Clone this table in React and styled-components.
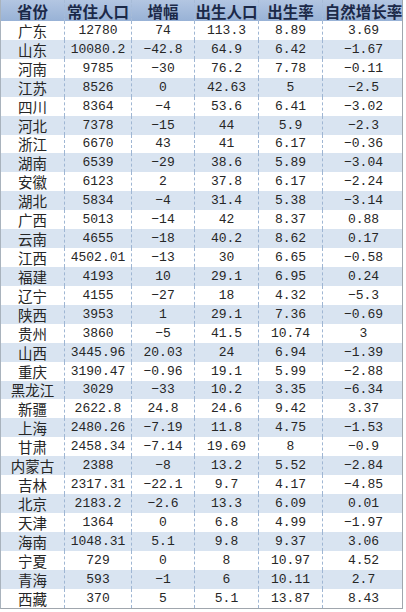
import React from 'react'
import styled, { createGlobalStyle } from 'styled-components';

const GlobalStyle = createGlobalStyle`
  html, body {
    margin: 0;
    padding: 0;
    background: #fff;
  }
`

const COLS = '63px 67px 63px 64px 64px 82px';

const Table = styled.div`
  width: 403px;
  display: flex;
  flex-direction: column;
  border-left: 1px solid #a9b3bd;
  border-right: 1px solid #a0a6ad;
  border-bottom: 1px solid #a0a6ad;
  box-sizing: border-box;
`

const HeadRow = styled.div`
  display: grid;
  grid-template-columns: ${COLS};
  height: 21px;
  background: linear-gradient(#b3c6e2, #98b2d6);
`

const Row = styled.div`
  display: grid;
  grid-template-columns: ${COLS};
  height: 18.93px;
  background: ${p => (p.$alt ? '#d9e4f1' : '#ffffff')};
`

const HeadCell = styled.div`
  display: flex;
  align-items: center;
  justify-content: center;
  box-sizing: border-box;
  border-left: ${p => (p.$first ? 'none' : '1px dashed #a7bcd8')};
  font-family: "Noto Sans CJK SC", sans-serif;
  font-weight: 700;
  font-size: 15.5px;
  line-height: 16px;
  color: #1b2948;
  white-space: nowrap;
  overflow: hidden;
`

const Cell = styled.div`
  display: flex;
  align-items: center;
  justify-content: center;
  box-sizing: border-box;
  overflow: hidden;
  border-left: ${p => (p.$first ? 'none' : '1px dashed #9fb6d3')};
  font-family: ${p => (p.$first ? '"Noto Sans CJK SC", sans-serif' : '"Liberation Mono", "DejaVu Sans Mono", monospace')};
  font-size: ${p => (p.$first ? '14.5px' : '13px')};
  line-height: 15px;
  color: #262626;
  white-space: nowrap;
`

const headers = ['省份', '常住人口', '增幅', '出生人口', '出生率', '自然增长率'];

const data = [
  ['广东', '12780', '74', '113.3', '8.89', '3.69'],
  ['山东', '10080.2', '-42.8', '64.9', '6.42', '-1.67'],
  ['河南', '9785', '-30', '76.2', '7.78', '-0.11'],
  ['江苏', '8526', '0', '42.63', '5', '-2.5'],
  ['四川', '8364', '-4', '53.6', '6.41', '-3.02'],
  ['河北', '7378', '-15', '44', '5.9', '-2.3'],
  ['浙江', '6670', '43', '41', '6.17', '-0.36'],
  ['湖南', '6539', '-29', '38.6', '5.89', '-3.04'],
  ['安徽', '6123', '2', '37.8', '6.17', '-2.24'],
  ['湖北', '5834', '-4', '31.4', '5.38', '-3.14'],
  ['广西', '5013', '-14', '42', '8.37', '0.88'],
  ['云南', '4655', '-18', '40.2', '8.62', '0.17'],
  ['江西', '4502.01', '-13', '30', '6.65', '-0.58'],
  ['福建', '4193', '10', '29.1', '6.95', '0.24'],
  ['辽宁', '4155', '-27', '18', '4.32', '-5.3'],
  ['陕西', '3953', '1', '29.1', '7.36', '-0.69'],
  ['贵州', '3860', '-5', '41.5', '10.74', '3'],
  ['山西', '3445.96', '20.03', '24', '6.94', '-1.39'],
  ['重庆', '3190.47', '-0.96', '19.1', '5.99', '-2.88'],
  ['黑龙江', '3029', '-33', '10.2', '3.35', '-6.34'],
  ['新疆', '2622.8', '24.8', '24.6', '9.42', '3.37'],
  ['上海', '2480.26', '-7.19', '11.8', '4.75', '-1.53'],
  ['甘肃', '2458.34', '-7.14', '19.69', '8', '-0.9'],
  ['内蒙古', '2388', '-8', '13.2', '5.52', '-2.84'],
  ['吉林', '2317.31', '-22.1', '9.7', '4.17', '-4.85'],
  ['北京', '2183.2', '-2.6', '13.3', '6.09', '0.01'],
  ['天津', '1364', '0', '6.8', '4.99', '-1.97'],
  ['海南', '1048.31', '5.1', '9.8', '9.37', '3.06'],
  ['宁夏', '729', '0', '8', '10.97', '4.52'],
  ['青海', '593', '-1', '6', '10.11', '2.7'],
  ['西藏', '370', '5', '5.1', '13.87', '8.43'],
];

// SimSun style long minus
const fmt = (v) => v.replace('-', '\u2212');

const App = () => {
  return (
    <>
      <GlobalStyle />
      <Table>
        <HeadRow>
          {headers.map((h, i) => (
            <HeadCell key={h} $first={i === 0}>{h}</HeadCell>
          ))}
        </HeadRow>
        {data.map((row, r) => (
          <Row key={row[0]} $alt={r % 2 === 1}>
            {row.map((v, i) => (
              <Cell key={i} $first={i === 0}>{i === 0 ? v : fmt(v)}</Cell>
            ))}
          </Row>
        ))}
      </Table>
    </>
  )
}

export default App;
